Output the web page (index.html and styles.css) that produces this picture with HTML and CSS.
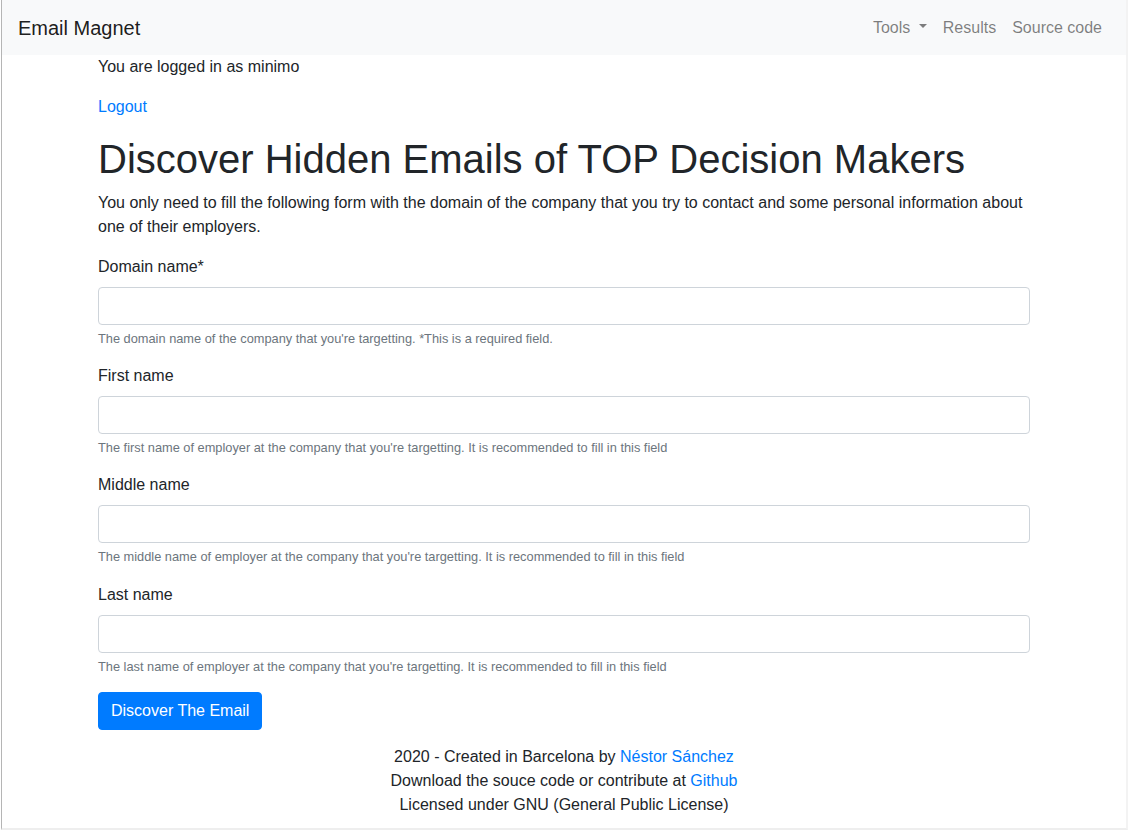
FILE: index.html
```html
<!DOCTYPE html>
<html lang="en">
<head>
<meta charset="utf-8">
<title>Email Magnet</title>
<link rel="stylesheet" href="styles.css">
</head>
<body>
<div class="page">
  <nav class="navbar">
    <a class="brand" href="#">Email Magnet</a>
    <ul class="nav">
      <li><a class="nav-link dropdown-toggle" href="#">Tools </a></li>
      <li><a class="nav-link" href="#">Results</a></li>
      <li><a class="nav-link" href="#">Source code</a></li>
    </ul>
  </nav>
  <main class="container">
    <p>You are logged in as minimo</p>
    <p><a href="#">Logout</a></p>
    <h1>Discover Hidden Emails of TOP Decision Makers</h1>
    <p class="lead-p">You only need to fill the following form with the domain of the company that you try to contact and some personal information about one of their employers.</p>
    <form>
      <div class="form-group">
        <label for="domain">Domain name*</label>
        <input id="domain" class="form-control" type="text">
        <small class="form-text">The domain name of the company that you're targetting. *This is a required field.</small>
      </div>
      <div class="form-group">
        <label for="first">First name</label>
        <input id="first" class="form-control" type="text">
        <small class="form-text">The first name of employer at the company that you're targetting. It is recommended to fill in this field</small>
      </div>
      <div class="form-group">
        <label for="middle">Middle name</label>
        <input id="middle" class="form-control" type="text">
        <small class="form-text">The middle name of employer at the company that you're targetting. It is recommended to fill in this field</small>
      </div>
      <div class="form-group">
        <label for="last">Last name</label>
        <input id="last" class="form-control" type="text">
        <small class="form-text">The last name of employer at the company that you're targetting. It is recommended to fill in this field</small>
      </div>
      <button type="button" class="btn">Discover The Email</button>
    </form>
    <footer class="footer">
      <div>2020 - Created in Barcelona by <a href="#">Néstor Sánchez</a></div>
      <div>Download the souce code or contribute at <a href="#">Github</a></div>
      <div>Licensed under GNU (General Public License)</div>
    </footer>
  </main>
</div>
</body>
</html>
```

FILE: styles.css
```css
* { box-sizing: border-box; }
html, body { margin: 0; padding: 0; background: #fff; }
body {
  font-family: "Liberation Sans", Arial, sans-serif;
  font-size: 16px;
  line-height: 1.5;
  color: #212529;
  overflow: hidden;
}
a { color: #007bff; text-decoration: none; }
.page {
  margin-left: 1px;
  border-left: 1px solid #b5b5b5;
  border-right: 2px solid #f3f3f3;
  border-bottom: 2px solid #eeeeee;
  height: 830px;
}
.navbar {
  display: flex;
  align-items: center;
  justify-content: space-between;
  height: 55px;
  padding: 0 16px;
  background: #f8f9fa;
}
.brand {
  font-size: 20px;
  line-height: 30px;
  color: rgba(0,0,0,.9);
}
.nav {
  display: flex;
  list-style: none;
  margin: 0;
  padding: 0;
}
.nav-link {
  display: block;
  padding: 8px 8px;
  color: rgba(0,0,0,.5);
}
.dropdown-toggle::after {
  content: "";
  display: inline-block;
  margin-left: .255em;
  vertical-align: .255em;
  border-top: .3em solid;
  border-right: .3em solid transparent;
  border-left: .3em solid transparent;
  border-bottom: 0;
}
.container {
  max-width: 962px;
  margin: 0 auto;
  padding: 0 15px;
}
p { margin: 0 0 16px; }
h1 {
  font-size: 40px;
  font-weight: 500;
  line-height: 1.2;
  margin: 0 0 8px;
}
.form-group { margin-bottom: 16px; }
label { display: inline-block; margin-bottom: 8px; }
.form-control {
  display: block;
  width: 100%;
  height: 38px;
  padding: 6px 12px;
  font: inherit;
  color: #495057;
  background: #fff;
  border: 1px solid #ced4da;
  border-radius: 4px;
}
.form-text {
  display: block;
  margin-top: 4px;
  font-size: 80%;
  color: #6c757d;
}
.btn {
  display: inline-block;
  height: 38px;
  padding: 6px 12px;
  font: inherit;
  color: #fff;
  background: #007bff;
  border: 1px solid #007bff;
  border-radius: 4px;
}
.footer {
  text-align: center;
  margin-top: 15px;
}
```
